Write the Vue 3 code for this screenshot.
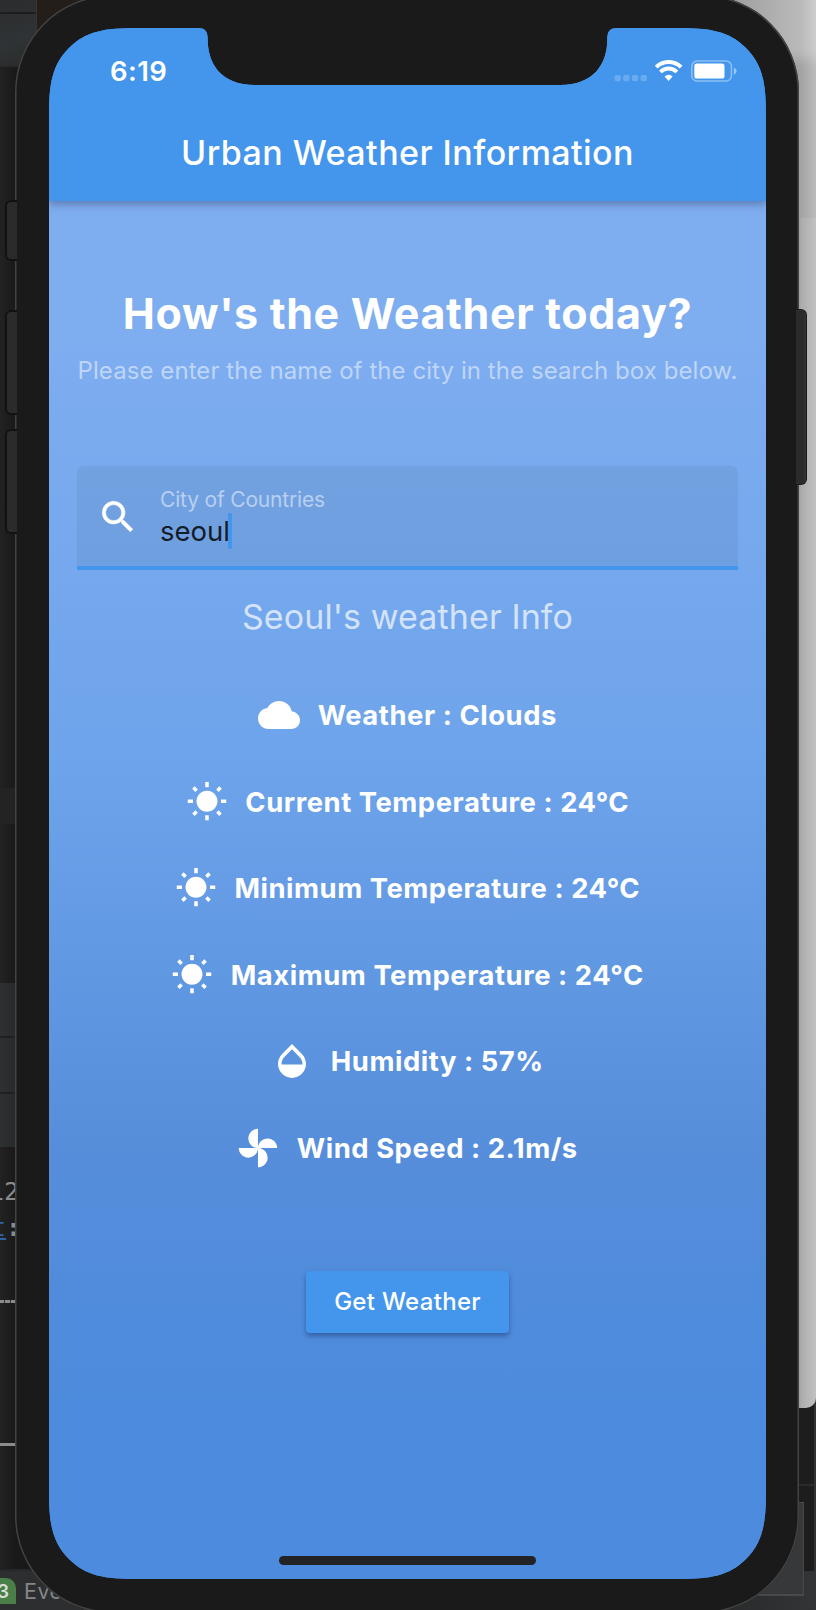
<script setup>
const icons = {
  cloud: 'M19.35 10.04C18.67 6.59 15.64 4 12 4 9.11 4 6.6 5.64 5.35 8.04 2.34 8.36 0 10.91 0 14c0 3.31 2.69 6 6 6h13c2.76 0 5-2.24 5-5 0-2.64-2.05-4.78-4.65-4.96z',
  sun: 'M6.76 4.84l-1.8-1.79-1.41 1.41 1.79 1.79 1.42-1.41zM4 10.5H1v2h3v-2zm9-9.95h-2V3.5h2V.55zm7.45 3.91l-1.41-1.41-1.79 1.79 1.41 1.41 1.79-1.79zm-3.21 13.7l1.79 1.8 1.41-1.41-1.8-1.79-1.4 1.4zM20 10.5v2h3v-2h-3zm-8-5c-3.31 0-6 2.69-6 6s2.69 6 6 6 6-2.69 6-6-2.69-6-6-6zm-1 16.95h2V19.5h-2v2.95zm-7.45-3.91l1.41 1.41 1.79-1.8-1.41-1.41-1.79 1.8z',
  drop: 'M17.66 8L12 2.35 6.34 8C4.78 9.56 4 11.64 4 13.64s.78 4.11 2.34 5.67 3.61 2.35 5.66 2.35 4.1-.79 5.66-2.35S20 15.64 20 13.64 19.22 9.56 17.66 8zM6 14c.01-2 .62-3.27 1.76-4.4L12 5.27l4.24 4.38C17.38 10.77 17.99 12 18 14H6z',
  fan: 'M12 12c0-3 2.5-5.5 5.5-5.5S23 9 23 12H12zm0 0c0 3-2.5 5.5-5.5 5.5S1 15 1 12h11zm0 0c-3 0-5.5-2.5-5.5-5.5S9 1 12 1v11zm0 0c3 0 5.5 2.5 5.5 5.5S15 23 12 23V12z',
}
const rows = [
  { icon: 'cloud', text: 'Weather : Clouds' },
  { icon: 'sun', text: 'Current Temperature : 24°C' },
  { icon: 'sun', text: 'Minimum Temperature : 24°C' },
  { icon: 'sun', text: 'Maximum Temperature : 24°C' },
  { icon: 'drop', text: 'Humidity : 57%' },
  { icon: 'fan', text: 'Wind Speed : 2.1m/s' },
]
</script>

<template>
  <div class="desktop">
    <div class="editor">
      <div class="e-tabs"></div>
      <div class="e-brown"></div>
      <div class="e-band"></div>
      <div class="e-panel"><i></i><i></i><i></i></div>
      <span class="e-num">12</span>
      <span class="e-link"><u>t</u>:</span>
      <div class="e-dash"></div>
      <div class="e-rule"></div>
      <div class="e-status">
        <span class="e-badge">3</span>
        <span class="e-event">Event</span>
      </div>
    </div>
    <div class="side-dark">
      <div class="s-line"></div>
      <div class="s-foot"></div>
      <div class="s-box"></div>
      <div class="s-edge"></div>
    </div>
    <div class="side-light"><div class="s-head"></div></div>

    <div class="phone">
      <div class="screen">
        <header class="top">
          <div class="status">
            <span class="time">6:19</span>
            <svg class="sys" width="124" height="24" viewBox="0 0 124 24">
              <g fill="#fff" opacity=".2">
                <rect x="0.5" y="15" width="6.3" height="6.3" rx="1.8" />
                <rect x="9.2" y="15" width="6.3" height="6.3" rx="1.8" />
                <rect x="17.9" y="15" width="6.3" height="6.3" rx="1.8" />
                <rect x="26.6" y="15" width="6.3" height="6.3" rx="1.8" />
              </g>
              <g fill="none" stroke="#fff" stroke-width="3.9">
                <path d="M42.2 7.1A17.6 17.6 0 0 1 67.1 7.1" />
                <path d="M46.5 12A11.4 11.4 0 0 1 62.8 12" />
              </g>
              <path fill="#fff" d="M50.6 16.4A5.7 5.7 0 0 1 58.6 16.4L54.6 20.9Z" />
              <rect x="77.8" y="1.1" width="39.6" height="20" rx="5.2" fill="none" stroke="#fff" stroke-opacity=".4" stroke-width="1.5" />
              <rect x="80.3" y="3.5" width="30.2" height="15.1" rx="2.6" fill="#fff" />
              <path d="M119.8 7.6C123.5 9 123.5 13.3 119.8 14.7Z" fill="#fff" opacity=".45" />
            </svg>
          </div>
          <div class="title">Urban Weather Information</div>
        </header>
        <main class="body">
          <h1>How's the Weather today?</h1>
          <p class="hint">Please enter the name of the city in the search box below.</p>
          <div class="field">
            <svg class="search" width="42" height="42" viewBox="0 0 24 24"><path fill="#fff" stroke="#fff" stroke-width=".25" d="M15.5 14h-.79l-.28-.27C15.41 12.59 16 11.11 16 9.5 16 5.91 13.09 3 9.5 3S3 5.91 3 9.5 5.91 16 9.5 16c1.61 0 3.09-.59 4.23-1.57l.27.28v.79l5 4.99L20.49 19l-4.99-5zm-6 0C7.01 14 5 11.99 5 9.5S7.01 5 9.5 5 14 7.01 14 9.5 11.99 14 9.5 14z" /></svg>
            <div class="entry">
              <label>City of Countries</label>
              <div class="value">seoul<span class="caret"></span></div>
            </div>
          </div>
          <h2>Seoul's weather Info</h2>
          <ul class="rows">
            <li v-for="row in rows" :key="row.text">
              <svg width="42" height="42" viewBox="0 0 24 24"><path fill="#fff" :d="icons[row.icon]" /></svg>
              <span>{{ row.text }}</span>
            </li>
          </ul>
          <button class="go">Get Weather</button>
          <div class="home"></div>
        </main>
      </div>
    </div>

    <div class="key k1"></div>
    <div class="key k2"></div>
    <div class="key k3"></div>
    <div class="power"></div>
  </div>
</template>

<style>
body { margin: 0; background: #1e1e1e; }
</style>

<style scoped>
.desktop {
  position: relative;
  width: 816px;
  height: 1610px;
  overflow: hidden;
  background: #1e1e1e;
  font-family: Inter, "Liberation Sans", sans-serif;
  color: #fff;
}
.desktop * { box-sizing: border-box; }

.editor { position: absolute; inset: 0 auto 0 0; width: 120px; background: linear-gradient(90deg, #222, #191919 16px); }
.editor > * { position: absolute; }
.e-tabs { left: 0; top: 0; width: 36px; height: 67px; background: linear-gradient(#1c1d1e, #1c1d1e) 0 12px / 100% 2px no-repeat, linear-gradient(160deg, #2a2c2e, #303335 60%, #292b2c); border-bottom: 2px solid #292b2b; }
.e-brown { left: 36px; top: 0; width: 84px; height: 67px; background: #241e1a; border-left: 1px solid #3a332e; }
.e-band { left: 0; top: 788px; width: 16px; height: 36px; background: #232323; }
.e-panel { left: 0; top: 983px; width: 16px; height: 164px; display: flex; flex-direction: column; gap: 2px; background: #1f2021; }
.e-panel i { flex: 1; background: linear-gradient(90deg, #2e3132, #27292a); }
.e-num, .e-link { font: 25px/30px "DejaVu Sans Mono", monospace; color: #8a8a8a; white-space: nowrap; }
.e-num { left: -11px; top: 1177px; }
.e-link { left: -9px; top: 1213px; font-weight: 700; }
.e-link u { color: #2d62ad; font-weight: 400; }
.e-dash { left: -1px; top: 1300px; width: 17px; height: 3px; background: repeating-linear-gradient(90deg, #8a8a8a 0 5px, #333 5px 6px); }
.e-rule { left: 0; top: 1443px; width: 16px; height: 3px; background: #8c8c8c; }
.e-status { left: 0; top: 1569px; width: 120px; height: 42px; background: #2c2e30; border-top: 2px solid #252728; display: flex; align-items: center; gap: 8px; }
.e-badge { width: 16px; height: 26px; background: #4b7f4a; border-radius: 0 10px 0 0; font-weight: 600; font-size: 19px; line-height: 27px; text-indent: -3px; color: #d5ddd5; }
.e-event { font-size: 21.5px; color: #858687; letter-spacing: .5px; }

.side-dark { position: absolute; right: 0; top: 1380px; width: 120px; height: 230px; background: #1d1d1d; }
.side-dark > * { position: absolute; }
.s-line { left: 0; right: 0; top: 104px; height: 2px; background: #2b2b2b; }
.s-foot { left: 0; right: 0; top: 191px; bottom: 0; background: linear-gradient(90deg, #262728, #333436); }
.s-box { left: 20px; top: 122px; width: 88px; height: 94px; background: #37383a; border: 1px solid #48494b; border-width: 1px 1px 2px 0; }
.s-edge { right: 0; top: 0; width: 2px; height: 191px; background: #323232; }
.side-light { position: absolute; left: 696px; top: 0; width: 120px; height: 1408px; border-radius: 0 0 10px 0; background: linear-gradient(90deg, #999 85%, #adadad 88%, #c2c2c2); }
.s-head { height: 218px; background: linear-gradient(90deg, #777 20%, #a4a4a4 88%, #bcbcbc); box-shadow: inset 0 67px 12px -8px rgba(255, 255, 255, .25); }

.key { position: absolute; left: 5px; width: 12px; background: #2b2b2b; border: 2px solid #121212; border-right: 0; border-radius: 6px 0 0 6px; }
.k1 { top: 200px; height: 61px; }
.k2 { top: 310px; height: 105px; }
.k3 { top: 429px; height: 105px; }
.power { position: absolute; left: 796px; top: 309px; width: 11px; height: 176px; border: 1px solid #1c1c1c; border-left: 0; border-radius: 0 6px 6px 0; background: linear-gradient(90deg, #2b2b2b 70%, #343434); }

.phone {
  position: absolute;
  left: 15px;
  top: -5px;
  width: 784px;
  height: 1618px;
  padding: 33px 33px 32px 34px;
  border-radius: 97px;
  background: #1a1a1a;
  box-shadow: inset 0 0 0 1.5px #434343;
}
.screen {
  width: 717px;
  height: 1551px;
  display: flex;
  flex-direction: column;
  background: #4496ec;
  clip-path: path("M0 88C0 56 3 37 20 20C37 3 56 0 88 0H148C156 0 158.7 3 158.7 11C158.7 36 172 57 206 57H511C545 57 558.3 36 558.3 11C558.3 3 561 0 569 0H629C661 0 680 3 697 20C714 37 717 56 717 88V1463C717 1495 714 1514 697 1531C680 1548 661 1551 629 1551H88C56 1551 37 1548 20 1531C3 1514 0 1495 0 1463Z");
}
.top { position: relative; z-index: 1; height: 173px; flex: none; background: #4496ec; box-shadow: 0 3px 8px rgba(50, 60, 90, .45); }
.status { display: flex; justify-content: space-between; padding: 26px 28px 0 61px; height: 95px; }
.time { font-size: 27.5px; line-height: 34px; font-weight: 600; letter-spacing: .4px; }
.sys { margin-top: 6px; }
.title { text-align: center; font-size: 34px; line-height: 60px; font-weight: 500; letter-spacing: .45px; white-space: nowrap; }

.body {
  flex: 1;
  display: flex;
  flex-direction: column;
  align-items: center;
  padding: 83.5px 28px 14px;
  background: linear-gradient(#7eadf0 10%, #6ea4eb 40%, #558dda 70%, #4c8bde 90%);
}
h1 { margin: 0; font-size: 43px; line-height: 56px; font-weight: 700; white-space: nowrap; letter-spacing: .65px; }
.hint { margin: 15px 0 0; font-size: 24px; line-height: 30px; color: rgba(255, 255, 255, .5); white-space: nowrap; letter-spacing: .07px; }
.field {
  width: 661px;
  height: 104px;
  margin-top: 80.5px;
  padding: 0 20px;
  display: flex;
  gap: 21px;
  background: rgba(0, 10, 0, .055);
  border-bottom: 4px solid #4496ec;
  border-radius: 7px 7px 0 0;
}
.search { margin-top: 30px; flex: none; }
.entry { padding-top: 20px; }
label { display: block; font-size: 21px; line-height: 27px; color: rgba(255, 255, 255, .5); letter-spacing: -.18px; }
.value { display: flex; font-size: 27.5px; line-height: 36px; color: #141c28; }
.caret { width: 4px; height: 36px; margin-left: -2px; background: #4496ec; border-radius: 1px; }
h2 { margin: 25px 0 0; font-size: 34px; line-height: 44px; font-weight: 400; color: rgba(255, 255, 255, .7); white-space: nowrap; letter-spacing: .1px; }
.rows { list-style: none; margin: 55px 0 0; padding: 0; display: flex; flex-direction: column; align-items: center; gap: 44.5px; }
.rows li { display: flex; align-items: center; gap: 17.5px; font-size: 27.4px; line-height: 42px; font-weight: 700; white-space: nowrap; letter-spacing: .55px; font-feature-settings: "calt" 0; }
.rows svg { display: block; }
.go {
  margin-top: 102.5px;
  width: 203px;
  height: 62px;
  padding: 0;
  border: 0;
  border-radius: 4px;
  background: #4496ec;
  box-shadow: 0 3px 5px rgba(20, 40, 90, .45);
  color: #fff;
  font: 500 24px/62px Inter, sans-serif;
  letter-spacing: .3px;
  flex: none;
}
.home { margin-top: auto; width: 257px; height: 9px; border-radius: 5px; background: #222324; }
</style>
